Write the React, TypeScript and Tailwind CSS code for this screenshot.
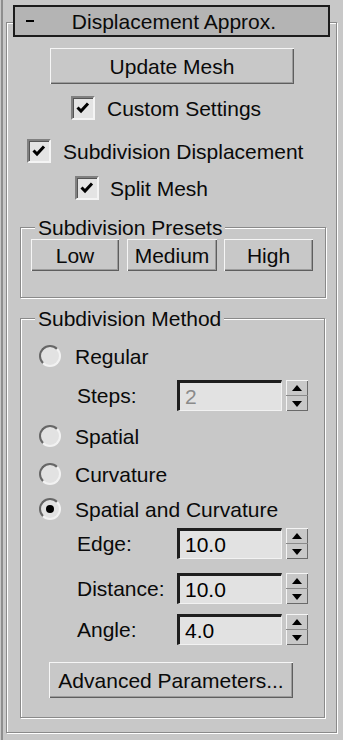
import React from "react";

const Check = ({ checked }: { checked: boolean }) => (
  <div className="w-[24px] h-[24px] shrink-0 border-2 border-t-[#808080] border-l-[#808080] border-r-[#f4f4f4] border-b-[#f4f4f4] bg-[#e4e4e4] shadow-[inset_1px_1px_0_#555555] flex items-center justify-center">
    {checked && (
      <svg width="16" height="16" viewBox="0 0 16 16">
        <path d="M2.5 7.5 L6 11 L13 3.5" fill="none" stroke="#000" strokeWidth="3" />
      </svg>
    )}
  </div>
);

const Radio = ({ checked }: { checked: boolean }) => (
  <div className="w-[22px] h-[22px] shrink-0 rounded-full border-2 border-t-[#666666] border-l-[#666666] border-r-[#f2f2f2] border-b-[#f2f2f2] bg-[#e2e2e2] flex items-center justify-center">
    {checked && <div className="w-[8px] h-[8px] rounded-full bg-black" />}
  </div>
);

const Btn = ({ children, className }: { children: React.ReactNode; className: string }) => (
  <div
    className={
      "flex items-center justify-center bg-[#c8c8c8] shadow-[inset_1px_1px_0_#f6f6f6,inset_-1px_-1px_0_#5e5e5e,inset_-2px_-2px_0_#9c9c9c] " +
      className
    }
  >
    {children}
  </div>
);

const Spinner = ({ label, value, disabled, className }: { label: string; value: string; disabled?: boolean; className: string }) => (
  <div className={"flex items-center h-[31px] pl-[56px] " + className}>
    <span className="w-[100px] shrink-0">{label}</span>
    <div
      className={
        "w-[105px] h-[31px] shrink-0 flex items-center pl-[5px] bg-[#e2e2e2] border-t-[3px] border-l-[3px] border-r border-b border-t-[#1e1e1e] border-l-[#1e1e1e] border-r-[#f2f2f2] border-b-[#f2f2f2] " +
        (disabled ? "text-[#8a8a8a]" : "text-black")
      }
    >
      {value}
    </div>
    <div className="ml-[4px] w-[22px] h-[31px] shrink-0 flex flex-col bg-[#c8c8c8] shadow-[inset_1px_1px_0_#f4f4f4,inset_-1px_-1px_0_#6a6a6a]">
      <div className="flex-1 flex items-center justify-center border-b border-[#8a8a8a]">
        <svg width="10" height="6" viewBox="0 0 10 6">
          <path d="M5 0 L10 6 L0 6 Z" fill="#000" />
        </svg>
      </div>
      <div className="flex-1 flex items-center justify-center">
        <svg width="10" height="6" viewBox="0 0 10 6">
          <path d="M0 0 L10 0 L5 6 Z" fill="#000" />
        </svg>
      </div>
    </div>
  </div>
);

const RadioRow = ({ label, checked, className }: { label: string; checked: boolean; className: string }) => (
  <div className={"flex items-center h-[22px] pl-[18px] gap-[14px] " + className}>
    <Radio checked={checked} />
    <span>{label}</span>
  </div>
);

export default function App() {
  return (
    <div className="w-[343px] h-[740px] overflow-hidden bg-[#c8c8c8] pl-px font-['Liberation_Sans',Arial,sans-serif] text-[21px] leading-none text-[#0a0a0a]">
      <div className="h-full border-l-2 border-[#8e8e8e] pt-[5px]">
        {/* Title bar */}
        <div className="relative z-10 ml-[10px] w-[317px] h-[32px] bg-[#b4b4b4] border-2 border-[#1c1c1c] flex items-center">
          <span className="w-[8px] h-[2px] bg-black ml-[11px] shrink-0" />
          <span className="flex-1 text-center pr-[14px]">Displacement Approx.</span>
        </div>
        {/* Rollout frame */}
        <div className="-mt-[15px] ml-[3px] w-[331px] h-[711px] border border-[#8a8a8a] shadow-[inset_1px_1px_0_#ffffff,1px_1px_0_#ffffff]">
          <Btn className="mt-[25px] ml-[43px] w-[244px] h-[36px]">Update Mesh</Btn>

          <div className="mt-[12px] ml-[64px] h-[24px] flex items-center gap-[12px]">
            <Check checked />
            <span>Custom Settings</span>
          </div>

          <div className="mt-[19px] ml-[20px] h-[24px] flex items-center gap-[12px]">
            <Check checked />
            <span>Subdivision Displacement</span>
          </div>

          <div className="mt-[13px] ml-[68px] h-[24px] flex items-center gap-[11px]">
            <Check checked />
            <span>Split Mesh</span>
          </div>

          {/* Presets group */}
          <div className="mt-[27px] ml-[13px] w-[306px] h-[71px] border border-[#8a8a8a] shadow-[inset_1px_1px_0_#ffffff,1px_1px_0_#ffffff]">
            <div className="-mt-[11px] ml-[14px] h-[21px] w-fit px-[3px] bg-[#c8c8c8] flex items-center">
              Subdivision Presets
            </div>
            <div className="mt-[1px] pl-[10px] flex gap-[8px]">
              <Btn className="w-[88px] h-[32px]">Low</Btn>
              <Btn className="w-[90px] h-[32px]">Medium</Btn>
              <Btn className="w-[89px] h-[32px] -ml-px">High</Btn>
            </div>
          </div>

          {/* Method group */}
          <div className="mt-[20px] ml-[13px] w-[305px] h-[400px] border border-[#8a8a8a] shadow-[inset_1px_1px_0_#ffffff,1px_1px_0_#ffffff]">
            <div className="-mt-[11px] ml-[14px] h-[21px] w-fit px-[3px] bg-[#c8c8c8] flex items-center">
              Subdivision Method
            </div>
            <RadioRow label="Regular" checked={false} className="mt-[16px]" />
            <Spinner label="Steps:" value="2" disabled className="mt-[13px]" />
            <RadioRow label="Spatial" checked={false} className="mt-[14px]" />
            <RadioRow label="Curvature" checked={false} className="mt-[16px]" />
            <RadioRow label="Spatial and Curvature" checked className="mt-[13px]" />
            <Spinner label="Edge:" value="10.0" className="mt-[8px]" />
            <Spinner label="Distance:" value="10.0" className="mt-[14px]" />
            <Spinner label="Angle:" value="4.0" className="mt-[10px]" />
            <Btn className="mt-[17px] ml-[28px] w-[244px] h-[36px]">Advanced Parameters...</Btn>
          </div>
        </div>
      </div>
    </div>
  );
}
